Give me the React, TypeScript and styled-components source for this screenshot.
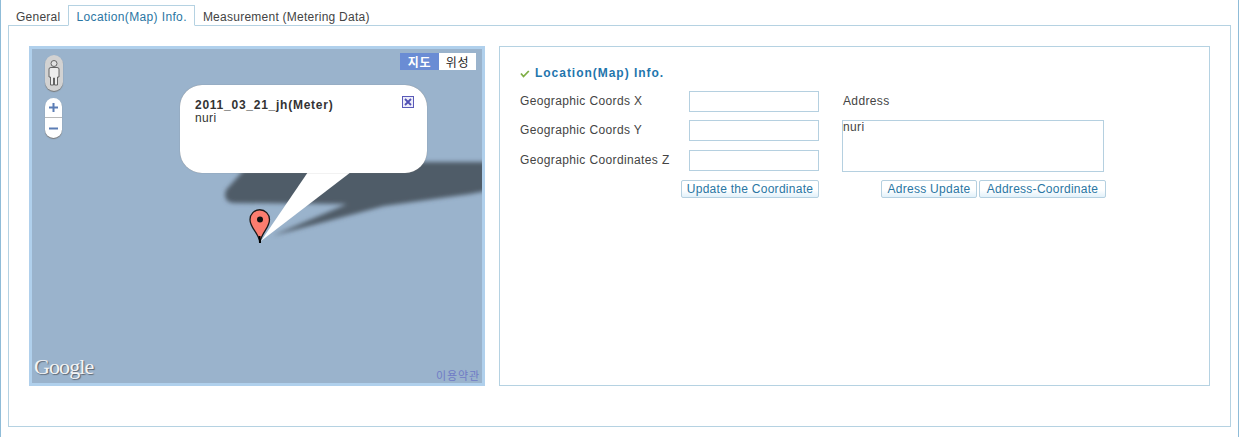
import styled, { createGlobalStyle } from "styled-components";

const GlobalStyle = createGlobalStyle`
  html, body {
    margin: 0;
    padding: 0;
    background: #fff;
  }
  body {
    font-family: "Liberation Sans", "Noto Sans CJK KR", sans-serif;
    font-size: 12px;
    letter-spacing: 0.37px;
    color: #444;
  }
`;

const Page = styled.div`
  width: 1239px;
  height: 437px;
  box-sizing: border-box;
  padding: 5px 7px 0;
  border-left: 1px solid #8fbcd8;
  border-right: 1px solid #8fbcd8;
  overflow: hidden;
`;

const TabBar = styled.div`
  display: flex;
  height: 21px;
  margin-bottom: -1px;
`;

const Tab = styled.div<{ $active?: boolean }>`
  position: relative;
  box-sizing: border-box;
  height: 21px;
  padding: 4px 7px 0;
  line-height: 14px;
  white-space: nowrap;
  letter-spacing: ${(p) => (p.$active ? "0.37px" : "0.25px")};
  color: ${(p) => (p.$active ? "#2a76a3" : "#444")};
  border: 1px solid ${(p) => (p.$active ? "#b5d2e2" : "transparent")};
  border-bottom-color: ${(p) => (p.$active ? "#fff" : "transparent")};
  z-index: ${(p) => (p.$active ? 1 : 0)};
`;

const TabBody = styled.div`
  display: flex;
  gap: 14px;
  box-sizing: border-box;
  width: 1223px;
  height: 402px;
  padding: 20px;
  border: 1px solid #b5d2e2;
`;

const MapBox = styled.div`
  position: relative;
  flex: none;
  width: 456px;
  height: 340px;
  box-sizing: border-box;
  border: 3px solid #b0d0ec;
  background: #9ab3cc;
  overflow: hidden;
`;

const MapDrawing = styled.svg`
  position: absolute;
  left: 0;
  top: 0;
`;

const PegControl = styled.div`
  position: absolute;
  left: 13px;
  top: 6px;
  width: 18px;
  height: 36px;
  border-radius: 9px;
  background: #d2d2d2;
  box-shadow: 0 1px 1px #777;
  display: flex;
  justify-content: center;
  align-items: center;
`;

const ZoomControl = styled.div`
  position: absolute;
  left: 13px;
  top: 49px;
  width: 17px;
  height: 40px;
  border-radius: 9px;
  background: #fff;
  box-shadow: 0 1px 1px #777;
  display: grid;
  grid-template-rows: 1fr 1fr;
`;

const ZoomButton = styled.div<{ $first?: boolean }>`
  display: flex;
  align-items: center;
  justify-content: center;
  border-bottom: ${(p) => (p.$first ? "1px solid #b9b9b9" : "none")};
`;

const MapType = styled.div`
  position: absolute;
  right: 6px;
  top: 4px;
  display: flex;
  height: 17px;
`;

const MapTypeButton = styled.div<{ $active?: boolean }>`
  display: flex;
  align-items: center;
  justify-content: center;
  width: ${(p) => (p.$active ? "39px" : "37px")};
  font-size: 12px;
  letter-spacing: 0.8px;
  font-weight: ${(p) => (p.$active ? 700 : 400)};
  color: ${(p) => (p.$active ? "#fff" : "#222")};
  background: ${(p) => (p.$active ? "#6a8cd4" : "#fff")};
`;

const Bubble = styled.div`
  position: absolute;
  left: 148px;
  top: 36px;
  width: 247px;
  height: 88px;
  box-sizing: border-box;
  padding: 14px 15px;
  border-radius: 22px;
  background: #fff;
  box-shadow: 0 0 1px #777;
  line-height: 13px;
  color: #333;
`;

const BubbleTitle = styled.div`
  font-weight: 700;
  letter-spacing: 0.75px;
  color: #333;
`;

const BubbleClose = styled.svg`
  position: absolute;
  right: 13px;
  top: 11px;
`;

const GoogleMark = styled.div`
  position: absolute;
  left: 2px;
  bottom: 3px;
  font-family: "Liberation Serif", serif;
  font-size: 22px;
  line-height: 26px;
  letter-spacing: -0.9px;
  color: #f4f4f4;
  text-shadow: 1px 1px 1px #5a6470;
`;

const TermsLink = styled.div`
  position: absolute;
  right: 2px;
  bottom: 0;
  font-size: 11px;
  line-height: 13px;
  letter-spacing: 0.9px;
  color: #6f7bc6;
`;

const Panel = styled.div`
  flex: none;
  width: 711px;
  height: 340px;
  box-sizing: border-box;
  padding: 19px 20px;
  border: 1px solid #b5d2e2;
`;

const SectionTitle = styled.h3`
  display: flex;
  align-items: center;
  gap: 5px;
  height: 14px;
  margin: 0 0 11px;
  font-size: 12px;
  letter-spacing: 0.97px;
  font-weight: 700;
  color: #1f76ad;
`;

const FormGrid = styled.div`
  display: grid;
  grid-template-columns: 169px 130px 23px 264px;
  grid-template-rows: 29px 30px 30px 18px;
  align-items: start;
`;

const FieldLabel = styled.label`
  grid-column: 1;
  line-height: 21px;
`;

const AddressLabel = styled.label`
  grid-column: 4;
  grid-row: 1;
  padding-left: 1px;
  line-height: 21px;
`;

const TextField = styled.input`
  grid-column: 2;
  box-sizing: border-box;
  width: 130px;
  height: 21px;
  padding: 0 2px;
  border: 1px solid #b5d0e0;
  outline: none;
  background: #fff;
`;

const AddressArea = styled.textarea`
  grid-column: 4;
  grid-row: 2 / 4;
  box-sizing: border-box;
  width: 262px;
  height: 52px;
  padding: 0;
  border: 1px solid #b5d0e0;
  outline: none;
  resize: none;
  overflow: hidden;
  font: inherit;
  letter-spacing: inherit;
  line-height: 13px;
  color: #444;
`;

const ButtonRow = styled.div<{ $area: string }>`
  grid-column: ${(p) => p.$area};
  grid-row: 4;
  display: flex;
  justify-content: flex-end;
  gap: 2px;
`;

const ActionButton = styled.button<{ $width: number }>`
  box-sizing: border-box;
  width: ${(p) => p.$width}px;
  height: 18px;
  padding: 0;
  border: 1px solid #b5d0e0;
  border-radius: 2px;
  background: linear-gradient(#fff 55%, #e2f1fa);
  font: inherit;
  letter-spacing: 0.27px;
  line-height: 15px;
  color: #2a76a3;
  white-space: nowrap;
`;

const App = () => {
  return (
    <>
      <GlobalStyle />
      <Page>
        <TabBar>
          <Tab>General</Tab>
          <Tab $active>Location(Map) Info.</Tab>
          <Tab>Measurement (Metering Data)</Tab>
        </TabBar>
        <TabBody>
          <MapBox>
            <MapDrawing width="450" height="334" viewBox="32 49 450 334">
              <defs>
                <filter id="soft" x="-10%" y="-20%" width="120%" height="140%">
                  <feGaussianBlur stdDeviation="2" />
                </filter>
              </defs>
              <path
                d="M244 170 L226 190 Q222 202 234 203 L347 204 L272 236 L283 233 L384 206 L470 194 Q482 192 492 190 L492 162 L400 162 Z"
                fill="#4f5b67"
                filter="url(#soft)"
              />
              <path
                d="M260 242 C258 232 250 228 250 219.500 A9.700 9.700 0 0 1 269.500 219.500 C269.500 228 262 232 260 242 Z"
                fill="#fb7d6f"
                stroke="#1a1a1a"
                strokeWidth="1.300"
              />
              <circle cx="260" cy="219.500" r="3" fill="#111" />
              <path d="M259.500 236 L260 243" stroke="#000" strokeWidth="2" />
              <path d="M308 172 L261 241 L351 172 Z" fill="#fff" />
            </MapDrawing>
            <PegControl>
              <svg width="14" height="28" viewBox="0 0 14 28">
                <circle cx="7" cy="4.500" r="3" fill="#e2e2e2" stroke="#666" />
                <path
                  d="M2 10 Q2 8.500 4 8.500 L10 8.500 Q12 8.500 12 10 L12 18 L10.500 18 L10.500 26 L7.500 26 L7.500 19 L6.500 19 L6.500 26 L3.500 26 L3.500 18 L2 18 Z"
                  fill="#ececec"
                  stroke="#555"
                  strokeWidth="0.900"
                />
              </svg>
            </PegControl>
            <ZoomControl>
              <ZoomButton $first>
                <svg width="11" height="11" viewBox="0 0 11 11">
                  <path d="M5.500 1 V10 M1 5.500 H10" stroke="#5b7db5" strokeWidth="2" />
                </svg>
              </ZoomButton>
              <ZoomButton>
                <svg width="11" height="11" viewBox="0 0 11 11">
                  <path d="M1 5.500 H10" stroke="#5b7db5" strokeWidth="2" />
                </svg>
              </ZoomButton>
            </ZoomControl>
            <MapType>
              <MapTypeButton $active>지도</MapTypeButton>
              <MapTypeButton>위성</MapTypeButton>
            </MapType>
            <Bubble>
              <BubbleTitle>2011_03_21_jh(Meter)</BubbleTitle>
              <div>nuri</div>
              <BubbleClose width="12" height="12" viewBox="0 0 12 12">
                <rect x="0.500" y="0.500" width="11" height="11" fill="#eeeefa" stroke="#5a5ab8" />
                <path d="M3 3 L9 9 M9 3 L3 9" stroke="#5050b4" strokeWidth="1.800" />
              </BubbleClose>
            </Bubble>
            <GoogleMark>Google</GoogleMark>
            <TermsLink>이용약관</TermsLink>
          </MapBox>
          <Panel>
            <SectionTitle>
              <svg width="10" height="9" viewBox="0 0 10 9">
                <path d="M1 4.500 L3.500 7.500 L8.800 2" fill="none" stroke="#7fae45" strokeWidth="1.800" />
              </svg>
              Location(Map) Info.
            </SectionTitle>
            <FormGrid>
              <FieldLabel>Geographic Coords X</FieldLabel>
              <TextField />
              <AddressLabel>Address</AddressLabel>
              <FieldLabel>Geographic Coords Y</FieldLabel>
              <TextField />
              <AddressArea defaultValue="nuri" />
              <FieldLabel>Geographic Coordinates Z</FieldLabel>
              <TextField />
              <ButtonRow $area="1 / 3">
                <ActionButton $width={138}>Update the Coordinate</ActionButton>
              </ButtonRow>
              <ButtonRow $area="3 / 5">
                <ActionButton $width={96}>Adress Update</ActionButton>
                <ActionButton $width={127}>Address-Coordinate</ActionButton>
              </ButtonRow>
            </FormGrid>
          </Panel>
        </TabBody>
      </Page>
    </>
  );
};

export default App;
